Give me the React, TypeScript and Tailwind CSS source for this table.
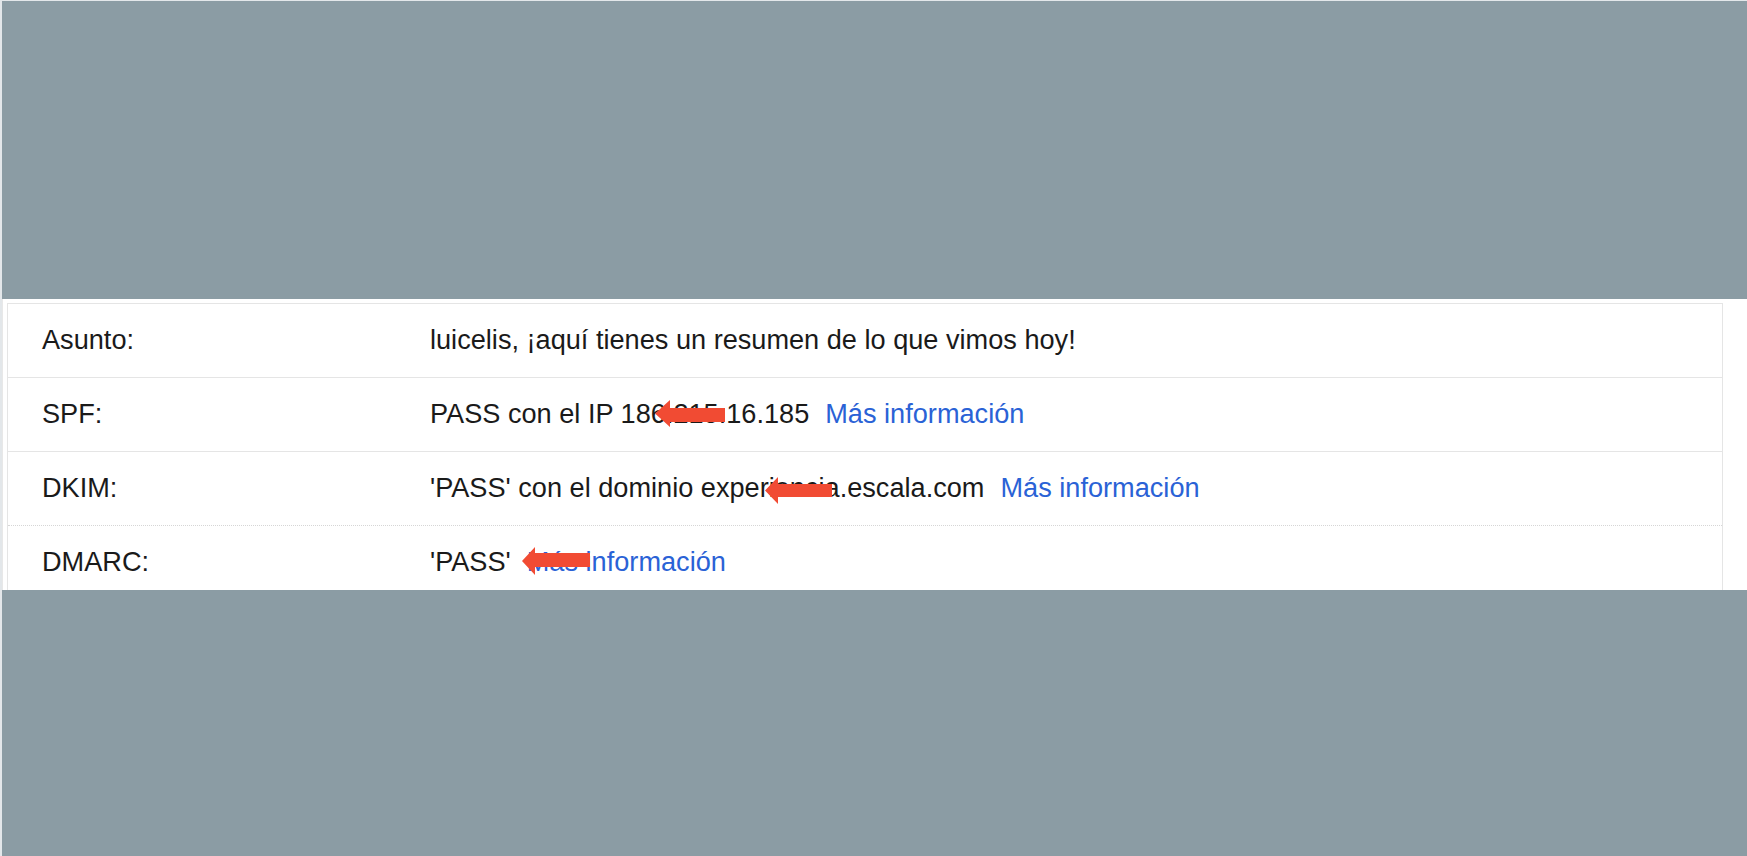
import React from 'react';

type Row = {
  label: string;
  value: React.ReactNode;
  link?: boolean;
  arrow?: { left: number; top: number; w: number; h: number; base: number; s1: number; s2: number };
};

function RedArrow({ w, h, base, s1, s2 }: { w: number; h: number; base: number; s1: number; s2: number }) {
  return (
    <svg width={w} height={h} viewBox={`0 0 ${w} ${h}`}>
      <polygon
        points={`0,${h / 2} ${base},0 ${base},${s1} ${w},${s1} ${w},${s2} ${base},${s2} ${base},${h}`}
        fill="#f14b33"
      />
    </svg>
  );
}

const rows: Row[] = [
  { label: 'Asunto:', value: 'luicelis, ¡aquí tienes un resumen de lo que vimos hoy!' },
  {
    label: 'SPF:',
    value: 'PASS con el IP 186.215.16.185',
    link: true,
    arrow: { left: 647, top: 22, w: 70, h: 27, base: 15, s1: 8, s2: 22 },
  },
  {
    label: 'DKIM:',
    value: "'PASS' con el dominio experiencia.escala.com",
    link: true,
    arrow: { left: 757, top: 25, w: 67, h: 27, base: 13, s1: 7, s2: 20 },
  },
  {
    label: 'DMARC:',
    value: "'PASS'",
    link: true,
    arrow: { left: 514, top: 21, w: 68, h: 28, base: 13, s1: 6, s2: 20 },
  },
];

export default function App() {
  return (
    <div className="w-full h-[856px] overflow-hidden flex flex-col bg-[#e3e7ea] pt-px pl-[2px] font-['Liberation_Sans',Arial,sans-serif]">
      {/* dimmed backdrop, top */}
      <div className="h-[298px] shrink-0 bg-[#8b9ca4]" />

      {/* visible slice of the message details */}
      <div className="h-[291px] shrink-0 overflow-hidden bg-white border-l border-[#e8e8e8] pt-[4px]">
        <div className="ml-[4px] mr-[24px] border-t border-l border-r border-[#e5e5e5]">
          {rows.map((r, i) => (
            <div
              key={r.label}
              className={
                'relative h-[74px] flex items-center pl-[34px] text-[27.15px] text-[#1a1a1a] border-b ' +
                (i === 2 ? 'border-dotted border-[#d6d6d6]' : 'border-[#e5e5e5]')
              }
            >
              <div className="w-[388px] shrink-0">{r.label}</div>
              <div className="flex items-center whitespace-nowrap">
                <span>{r.value}</span>
                {r.link && <span className="ml-[16px] text-[#2a62d6]">Más información</span>}
              </div>
              {r.arrow && (
                <div className="absolute" style={{ left: r.arrow.left, top: r.arrow.top }}>
                  <RedArrow w={r.arrow.w} h={r.arrow.h} base={r.arrow.base} s1={r.arrow.s1} s2={r.arrow.s2} />
                </div>
              )}
            </div>
          ))}
        </div>
      </div>

      {/* dimmed backdrop, bottom */}
      <div className="flex-1 bg-[#8b9ca4]" />
    </div>
  );
}
